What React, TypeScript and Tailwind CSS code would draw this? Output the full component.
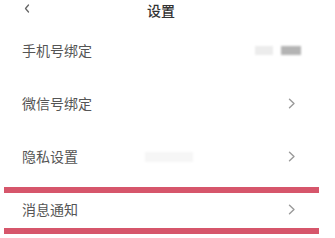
import React from "react";

const Chevron = () => (
  <svg width="8" height="11" viewBox="0 0 8 11" className="shrink-0">
    <path d="M1.5 1.2 L6 5.5 L1.5 9.8" fill="none" stroke="#9a9a9a" strokeWidth="1.4" strokeLinecap="round" strokeLinejoin="round" />
  </svg>
);

export default function App() {
  const font = { fontFamily: '"Noto Sans CJK SC", "Noto Sans", sans-serif' };
  return (
    <div className="relative w-[335px] h-[238px] bg-white overflow-hidden" style={font}>
      <div className="flex items-center h-[20px] pl-[24px]">
        <svg width="6" height="9" viewBox="0 0 6 9" className="shrink-0 mt-[-3px]">
          <path d="M4.5 1 L1.5 4.5 L4.5 8" fill="none" stroke="#666" strokeWidth="1.3" strokeLinecap="round" strokeLinejoin="round" />
        </svg>
        <span className="ml-[117px] text-[14px] leading-[18px] text-[#333] font-medium">设置</span>
      </div>
      <div className="flex flex-col pt-[4px]">
        <div className="flex items-center h-[53px] pl-[22px] pr-[34px]">
          <span className="text-[14px] text-[#555] flex-1">手机号绑定</span>
          <div className="w-[18px] h-[9px] bg-[#ececec] blur-[1px]" />
          <div className="w-[20px] h-[9px] bg-[#b4b4b4] blur-[1px] ml-[8px]" />
        </div>
        <div className="flex items-center h-[53px] pl-[22px] pr-[39px]">
          <span className="text-[14px] text-[#555] flex-1">微信号绑定</span>
          <Chevron />
        </div>
        <div className="flex items-center h-[53px] pl-[22px] pr-[39px]">
          <span className="text-[14px] text-[#555] w-[123px]">隐私设置</span>
          <div className="w-[48px] h-[10px] bg-[#f6f6f6] blur-[1px]" />
          <div className="flex-1" />
          <Chevron />
        </div>
        <div className="flex items-center h-[53px] pl-[22px] pr-[39px]">
          <span className="text-[14px] text-[#555] flex-1">消息通知</span>
          <Chevron />
        </div>
      </div>
      <div className="absolute left-[4px] w-[315px] top-[187px] h-[6px] bg-[#d6566b]" />
      <div className="absolute left-[4px] w-[315px] top-[228px] h-[6px] bg-[#d6566b]" />
    </div>
  );
}
